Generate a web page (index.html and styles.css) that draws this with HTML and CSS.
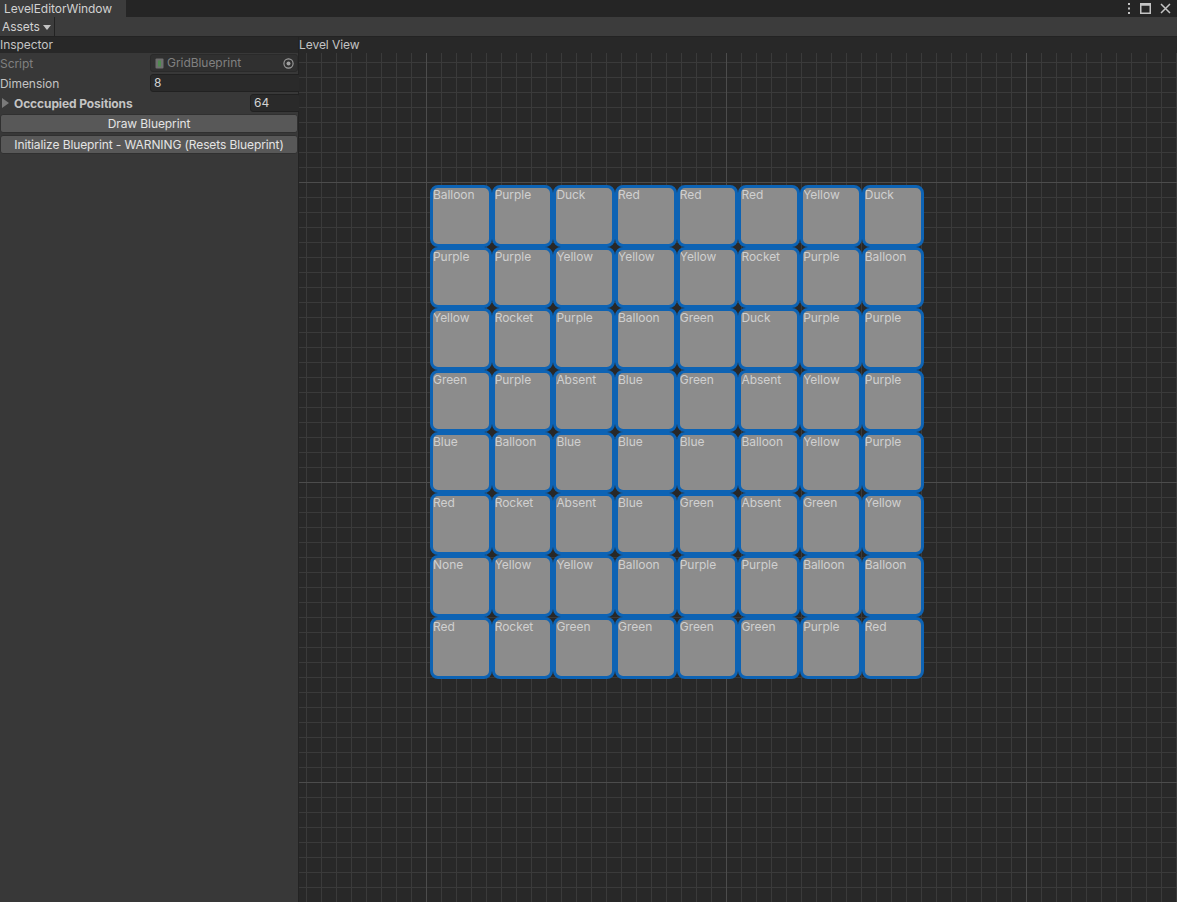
FILE: index.html
```html
<!DOCTYPE html>
<html>
<head>
<meta charset="utf-8">
<link rel="stylesheet" href="styles.css">
</head>
<body>
<div class="window">
  <div class="titlebar">
    <div class="tab">LevelEditorWindow</div>
    <div class="win-icons">
      <svg width="4" height="11" viewBox="0 0 4 11"><rect x="1" y="0" width="2" height="2" fill="#c4c4c4"/><rect x="1" y="4.5" width="2" height="2" fill="#c4c4c4"/><rect x="1" y="9" width="2" height="2" fill="#c4c4c4"/></svg>
      <svg width="11" height="11" viewBox="0 0 11 11"><rect x="0.75" y="0.75" width="9.5" height="9.5" fill="none" stroke="#c4c4c4" stroke-width="1.5"/><rect x="0.75" y="0.75" width="9.5" height="2" fill="#c4c4c4"/></svg>
      <svg width="11" height="11" viewBox="0 0 11 11"><path d="M1 1 L10 10 M10 1 L1 10" stroke="#c4c4c4" stroke-width="1.5"/></svg>
    </div>
  </div>
  <div class="toolbar">
    <div class="dropdown">Assets <span class="caret"></span></div>
  </div>
  <div class="main">
    <div class="inspector">
      <div class="header">Inspector</div>
      <div class="row disabled">
        <div class="label">Script</div>
        <div class="field objfield">
          <svg class="scripticon" width="9" height="11" viewBox="0 0 9 11"><rect x="0.5" y="0.5" width="8" height="10" rx="1" fill="#6f6f6f"/><rect x="3" y="2.5" width="3" height="6" fill="#4f8a4f"/></svg>
          <span>GridBlueprint</span>
          <svg class="target" width="11" height="11" viewBox="0 0 11 11"><circle cx="5.5" cy="5.5" r="4.6" fill="none" stroke="#a0a0a0" stroke-width="1.1"/><circle cx="5.5" cy="5.5" r="2" fill="#a0a0a0"/></svg>
        </div>
      </div>
      <div class="row">
        <div class="label">Dimension</div>
        <div class="field">8</div>
      </div>
      <div class="row">
        <div class="label bold"><span class="tri"></span>Occcupied Positions</div>
        <div class="field small">64</div>
      </div>
      <div class="button">Draw Blueprint</div>
      <div class="button">Initialize Blueprint - WARNING (Resets Blueprint)</div>
    </div>
    <div class="levelview">
      <div class="header">Level View</div>
      <div class="canvas">
        <div class="board">
          <div class="cell">Balloon</div><div class="cell">Purple</div><div class="cell">Duck</div><div class="cell">Red</div><div class="cell">Red</div><div class="cell">Red</div><div class="cell">Yellow</div><div class="cell">Duck</div>
          <div class="cell">Purple</div><div class="cell">Purple</div><div class="cell">Yellow</div><div class="cell">Yellow</div><div class="cell">Yellow</div><div class="cell">Rocket</div><div class="cell">Purple</div><div class="cell">Balloon</div>
          <div class="cell">Yellow</div><div class="cell">Rocket</div><div class="cell">Purple</div><div class="cell">Balloon</div><div class="cell">Green</div><div class="cell">Duck</div><div class="cell">Purple</div><div class="cell">Purple</div>
          <div class="cell">Green</div><div class="cell">Purple</div><div class="cell">Absent</div><div class="cell">Blue</div><div class="cell">Green</div><div class="cell">Absent</div><div class="cell">Yellow</div><div class="cell">Purple</div>
          <div class="cell">Blue</div><div class="cell">Balloon</div><div class="cell">Blue</div><div class="cell">Blue</div><div class="cell">Blue</div><div class="cell">Balloon</div><div class="cell">Yellow</div><div class="cell">Purple</div>
          <div class="cell">Red</div><div class="cell">Rocket</div><div class="cell">Absent</div><div class="cell">Blue</div><div class="cell">Green</div><div class="cell">Absent</div><div class="cell">Green</div><div class="cell">Yellow</div>
          <div class="cell">None</div><div class="cell">Yellow</div><div class="cell">Yellow</div><div class="cell">Balloon</div><div class="cell">Purple</div><div class="cell">Purple</div><div class="cell">Balloon</div><div class="cell">Balloon</div>
          <div class="cell">Red</div><div class="cell">Rocket</div><div class="cell">Green</div><div class="cell">Green</div><div class="cell">Green</div><div class="cell">Green</div><div class="cell">Purple</div><div class="cell">Red</div>
        </div>
      </div>
    </div>
  </div>
</div>
</body>
</html>
```

FILE: styles.css
```css
* { box-sizing: border-box; }
html, body { margin: 0; padding: 0; }
body {
  width: 1177px;
  height: 902px;
  overflow: hidden;
  background: #282828;
  font-family: Inter, "Noto Sans", sans-serif;
  font-size: 12px;
  color: #c4c4c4;
  letter-spacing: -0.05px;
}
.window { display: flex; flex-direction: column; height: 902px; }
.titlebar {
  height: 17px;
  background: #252525;
  display: flex;
  align-items: stretch;
  justify-content: space-between;
}
.tab {
  width: 126px;
  background: #3c3c3c;
  padding-left: 4px;
  line-height: 17px;
  color: #d2d2d2;
}
.win-icons {
  display: flex;
  align-items: center;
  gap: 9px;
  padding-right: 6px;
}
.toolbar {
  height: 20px;
  background: #3c3c3c;
  border-bottom: 1px solid #232323;
  display: flex;
}
.dropdown {
  width: 55px;
  border-right: 1px solid #232323;
  padding-left: 2px;
  line-height: 19px;
  color: #d2d2d2;
  display: flex;
  align-items: center;
  gap: 3px;
}
.caret {
  width: 0; height: 0;
  border-left: 4px solid transparent;
  border-right: 4px solid transparent;
  border-top: 5px solid #c4c4c4;
  margin-top: 1px;
}
.main { flex: 1; display: flex; min-height: 0; }
.inspector {
  width: 299px;
  background: #383838;
  border-right: 1px solid #232323;
  display: flex;
  flex-direction: column;
}
.header {
  height: 16px;
  line-height: 16px;
  background: #282828;
  color: #c4c4c4;
  flex-shrink: 0;
}
.inspector .header { margin-bottom: 1px; }
.row {
  height: 18px;
  margin-bottom: 2px;
  display: flex;
  align-items: center;
}
.label { width: 150px; color: #c4c4c4; display: flex; align-items: center; }
.label.bold { font-weight: 700; width: 250px; letter-spacing: -0.1px; }
.disabled .label { color: #808080; }
.tri {
  width: 0; height: 0;
  border-top: 5px solid transparent;
  border-bottom: 5px solid transparent;
  border-left: 7px solid #7a7a7a;
  margin: 0 5px 0 2px;
}
.field {
  flex: 1;
  height: 18px;
  background: #2a2a2a;
  border: 1px solid #212121;
  border-radius: 3px;
  padding-left: 3px;
  line-height: 16px;
  color: #d2d2d2;
  margin-right: -4px;
}
.field.small { flex: 0 0 51px; }
.objfield {
  display: flex;
  align-items: center;
  gap: 2px;
  color: #808080;
  background: #303030;
  border-color: #2a2a2a;
  padding-left: 4px;
  margin-right: 0;
}
.objfield span { flex: 1; }
.scripticon { margin-right: 1px; }
.target { margin-right: 3px; }
.button {
  height: 19px;
  margin-bottom: 2px;
  background: #585858;
  border: 1px solid #303030;
  border-radius: 3px;
  text-align: center;
  line-height: 17px;
  color: #e4e4e4;
  letter-spacing: -0.1px;
}
.levelview { flex: 1; display: flex; flex-direction: column; }
.canvas {
  flex: 1;
  background-color: #282828;
  background-image:
    linear-gradient(to right, #4c4c4c 1px, transparent 1px),
    linear-gradient(to bottom, #4c4c4c 1px, transparent 1px),
    linear-gradient(to right, #3a3a3a 1px, transparent 1px),
    linear-gradient(to bottom, #3a3a3a 1px, transparent 1px);
  background-size: 300px 300px, 300px 300px, 15px 15px, 15px 15px;
  background-position: 127px 0, 0 129px, 7px 0, 0 9px;
  padding: 132px 0 0 131px;
}
.board {
  display: grid;
  grid-template-columns: repeat(8, 61.7px);
  grid-auto-rows: 61.7px;
  width: 494px;
}
.cell {
  background: #8c8c8c;
  border: 3px solid #0d63b4;
  border-radius: 8px;
  color: #d0d0d0;
  line-height: 14px;
  font-size: 12px;
  white-space: nowrap;
  overflow: hidden;
}
```
